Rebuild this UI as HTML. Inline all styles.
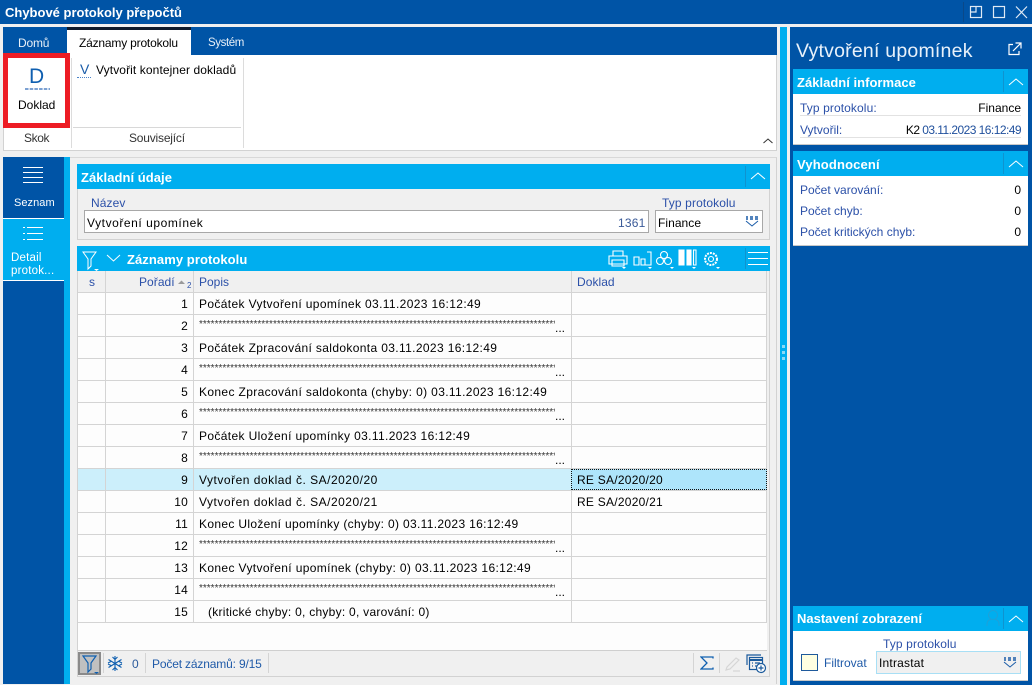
<!DOCTYPE html>
<html lang="cs"><head><meta charset="utf-8"><title>Chybové protokoly přepočtů</title>
<style>
*{box-sizing:border-box}
html,body{margin:0;padding:0;width:1032px;height:685px;overflow:hidden;background:#f0f0f0;font-family:"Liberation Sans",sans-serif;font-size:12px;color:#000}
.a,.t,svg{position:absolute}
.t{white-space:nowrap;line-height:16px}
.l{color:#2b50a8}
.w{color:#fff}
.h{background:#00aeef;position:absolute;height:25px}
.b{font-weight:bold;font-size:13px;letter-spacing:.05px;color:#fff}
.r{position:absolute;left:78px;width:689px;height:22px;border-bottom:1px solid #d4d4d4;background:#fdfdfd}
.r i{position:absolute;top:0;bottom:0;width:1px;background:#d4d4d4}
.r i:first-child{display:none}
.r b{font-weight:normal;position:absolute;right:579px;top:3px;line-height:16px;width:60px;text-align:right;letter-spacing:.2px}
.r span{position:absolute;left:121px;top:3px;line-height:16px;white-space:nowrap;letter-spacing:.36px}
.r u{text-decoration:none;position:absolute;left:121px;top:2px;line-height:16px;white-space:nowrap;font-size:10px;color:#333;width:356px;overflow:hidden}
.r em{font-style:normal;position:absolute;left:477px;top:5px;line-height:16px;font-size:12px}
.r s{text-decoration:none;position:absolute;left:499px;top:3px;line-height:16px;white-space:nowrap;letter-spacing:.25px}
</style></head><body>

<div class="a" style="left:0;top:0;width:1032px;height:24px;background:#0054a6"></div>
<div class="t b" style="left:5px;top:5px;letter-spacing:0">Chybové protokoly přepočtů</div>
<div class="a" style="left:963px;top:2px;width:1px;height:20px;background:#0a4888"></div>
<svg style="left:969px;top:5px" width="60" height="15" fill="none" stroke="#dfeaf5" stroke-width="1.2"><rect x="1.5" y="1.5" width="11" height="11"/><path d="M7 1.500V7H1.500" /><rect x="24.500" y="1.500" width="11" height="11"/><path d="M47 1.500L58 13M58 1.500L47 13"/></svg>

<!-- ribbon -->
<div class="a" style="left:3px;top:27px;width:774px;height:28px;background:#0054a6"></div>
<div class="a" style="left:3px;top:55px;width:774px;height:96px;background:#fff;border:1px solid #d2d2d2;border-top:0"></div>
<div class="a" style="left:67px;top:27px;width:124px;height:28px;background:#fff;border-top:3px solid #0e1a2b"></div>
<div class="t" style="left:18px;top:35px;letter-spacing:-.2px;color:#e8f0f8">Domů</div>
<div class="t" style="left:79px;top:35px;letter-spacing:-.19px">Záznamy protokolu</div>
<div class="t" style="left:208px;top:35px;font-size:11.500px;letter-spacing:-.4px;color:#e8f0f8">Systém</div>
<div class="a" style="left:3px;top:53px;width:67px;height:75px;border:5px solid #ed1c24;background:#fff"></div>
<div class="t" style="left:29px;top:65px;font-size:21px;line-height:24px;color:#0f5fb0">D</div>
<svg style="left:25px;top:88px" width="25" height="2"><path d="M0 1H25" stroke="#2f69b8" stroke-width="1.300" stroke-dasharray="3.500 1.200"/></svg>
<div class="t" style="left:18px;top:97px;letter-spacing:0">Doklad</div>
<div class="t" style="left:80px;top:61px;font-size:14px;line-height:16px;color:#1a5ca8">V</div>
<div class="a" style="left:77px;top:77px;width:14px;height:0;border-top:1px dotted #4a82c8"></div>
<div class="t" style="left:96px;top:62px;letter-spacing:.1px">Vytvořit kontejner dokladů</div>
<div class="a" style="left:73px;top:127px;width:168px;height:1px;background:#d8d8d8"></div>
<div class="a" style="left:71px;top:58px;width:1px;height:90px;background:#dcdcdc"></div>
<div class="a" style="left:243px;top:58px;width:1px;height:90px;background:#dcdcdc"></div>
<div class="t" style="left:24px;top:130px;color:#333;letter-spacing:-.4px">Skok</div>
<div class="t" style="left:129px;top:130px;color:#333;letter-spacing:-.2px">Související</div>
<svg style="left:762px;top:137px" width="12" height="8" fill="none" stroke="#333" stroke-width="1"><path d="M1.500 6L6 2l4.500 4"/></svg>

<!-- left nav -->
<div class="a" style="left:3px;top:157px;width:61px;height:527px;background:#0054a6"></div>
<div class="a" style="left:64px;top:157px;width:6px;height:527px;background:#00aeef"></div>
<div class="a" style="left:70px;top:157px;width:707px;height:527px;background:#f0f0f0;border-right:1px solid #d2d2d2;border-top:1px solid #d8d8d8"></div>
<svg style="left:23px;top:166px" width="20" height="20" stroke="#fff" stroke-width="1"><path d="M0 1.500H20M0 6.500H20M0 11.500H20M0 16.500H20"/></svg>
<div class="t w" style="left:14px;top:195px;font-size:11px;letter-spacing:.05px">Seznam</div>
<div class="a" style="left:3px;top:218px;width:61px;height:63px;background:#00aeef;border-top:1px solid #fff;border-bottom:1px solid #fff"></div>
<svg style="left:23px;top:226px" width="20" height="16" stroke="#fff" stroke-width="1"><path d="M4 1.500H20M4 7.500H20M4 13.500H20M0 1.500H2M0 7.500H2M0 13.500H2"/></svg>
<div class="t w" style="left:11px;top:252px;font-size:11.500px;line-height:13px;letter-spacing:.2px">Detail<br>protok...</div>

<!-- section zakladni udaje -->
<div class="a" style="left:77px;top:189px;width:693px;height:51px;background:#f0f0f0;border:1px solid #d2d2d2;border-top:0"></div>
<div class="h" style="left:77px;top:164px;width:693px"></div>
<div class="t b" style="left:81px;top:170px">Základní údaje</div>
<div class="a" style="left:745px;top:166px;width:1px;height:21px;background:#0f93cf"></div>
<svg style="left:750px;top:171px" width="16" height="10" fill="none" stroke="#fff" stroke-width="1"><path d="M1 8L8 2l7 6"/></svg>
<div class="t l" style="left:91px;top:195px;letter-spacing:.1px">Název</div>
<div class="a" style="left:84px;top:210px;width:565px;height:23px;background:#fff;border:1px solid #a8a8a8"></div>
<div class="t" style="left:87px;top:215px;letter-spacing:.56px">Vytvoření upomínek</div>
<div class="t" style="left:618px;top:215px;color:#3a5a98;letter-spacing:.2px">1361</div>
<div class="t l" style="left:662px;top:195px;letter-spacing:.12px">Typ protokolu</div>
<div class="a" style="left:655px;top:210px;width:108px;height:23px;background:#fff;border:1px solid #a8a8a8"></div>
<div class="t" style="left:658px;top:215px;letter-spacing:.05px">Finance</div>
<svg style="left:745px;top:216px" width="14" height="12" fill="none" stroke="#1a5ca8"><path d="M1 5l6 5 6-5" stroke-width="1"/><path d="M1 1h2M5 1h3M10 1h3M1 3h2M5 3h3M10 3h3" stroke-width="1.600"/></svg>

<!-- grid -->
<div class="a" style="left:77px;top:271px;width:693px;height:406px;background:#f0f0f0;border:1px solid #d2d2d2;border-top:0"></div>
<div class="h" style="left:77px;top:246px;width:693px"></div>
<svg style="left:82px;top:251px" width="20" height="20" fill="none" stroke="#fff" stroke-width="1"><path d="M1 1H14L9 8V15L6 18V8Z"/><path d="M12 18h5l-2.500 2z" fill="#fff" stroke="none"/></svg>
<svg style="left:106px;top:254px" width="15" height="9" fill="none" stroke="#fff" stroke-width="1"><path d="M1 1l6.500 6L14 1"/></svg>
<div class="t b" style="left:127px;top:252px;letter-spacing:.07px">Záznamy protokolu</div>
<svg style="left:608px;top:249px" width="130" height="22" fill="none" stroke="#fff" stroke-width="1.100">
<path d="M5 7V2H15V7M1 7H19V15H1ZM4 11H16V17H4Z"/><path d="M14 18h4l-2 2z" fill="#fff" stroke="none"/>
<path d="M26 8H31V16H26ZM33 10H37V16H33ZM39 3H43V16H37" /><path d="M40 18h4l-2 2z" fill="#fff" stroke="none"/>
<circle cx="56" cy="6" r="3.500"/><circle cx="52" cy="12" r="3.500"/><circle cx="60" cy="12" r="3.500"/><path d="M62 18h4l-2 2z" fill="#fff" stroke="none"/>
<path d="M71 1H76V16H71ZM79 1H83V16H79Z" fill="#fff"/><path d="M85.500 1H88V16H85.500Z"/><path d="M84 18h4l-2 2z" fill="#fff" stroke="none"/>
<circle cx="103" cy="10" r="6" stroke-dasharray="2 1" stroke-width="2"/><circle cx="103" cy="10" r="2.500"/><path d="M108 18h4l-2 2z" fill="#fff" stroke="none"/>
</svg>
<div class="a" style="left:745px;top:248px;width:1px;height:21px;background:#0f93cf"></div>
<svg style="left:748px;top:252px" width="20" height="14" stroke="#fff" stroke-width="1"><path d="M0 .500H20M0 6.500H20M0 12.500H20"/></svg>

<!-- column header -->
<div class="a" style="left:78px;top:271px;width:689px;height:22px;background:#f0f0f0;border-bottom:1px solid #d4d4d4"></div>
<div class="a" style="left:105px;top:271px;width:1px;height:22px;background:#d4d4d4"></div>
<div class="a" style="left:193px;top:271px;width:1px;height:22px;background:#d4d4d4"></div>
<div class="a" style="left:571px;top:271px;width:1px;height:22px;background:#d4d4d4"></div>
<div class="a" style="left:766px;top:271px;width:1px;height:22px;background:#d4d4d4"></div>
<div class="t l" style="left:89px;top:274px">s</div>
<div class="t l" style="left:139px;top:274px;letter-spacing:.05px">Pořadí</div>
<svg style="left:177px;top:279px" width="16" height="10"><path d="M1 5l3.500-3.500L8 5z" fill="#9a9a9a"/><text x="10" y="9" font-family="Liberation Sans" font-size="8" fill="#2b50a8">2</text></svg>
<div class="t l" style="left:199px;top:274px">Popis</div>
<div class="t l" style="left:577px;top:274px;letter-spacing:.05px">Doklad</div>

<!-- rows -->
<div class="a" style="left:78px;top:293px;width:691px;height:358px;background:#fdfdfd;border-bottom:1px solid #cfcfcf"></div>
<div class="a" style="left:767px;top:271px;width:3px;height:380px;background:#f0f0f0"></div>
<div class="a" style="left:769px;top:271px;width:1px;height:380px;background:#d2d2d2"></div>

<div class="r" style="top:293px"><i style="left:0"></i><i style="left:27px"></i><i style="left:115px"></i><i style="left:493px"></i><i style="left:688px"></i><b>1</b><span>Počátek Vytvoření upomínek 03.11.2023 16:12:49</span></div>
<div class="r" style="top:315px"><i style="left:0"></i><i style="left:27px"></i><i style="left:115px"></i><i style="left:493px"></i><i style="left:688px"></i><b>2</b><u>*****************************************************************************************************************</u><em>...</em></div>
<div class="r" style="top:337px"><i style="left:0"></i><i style="left:27px"></i><i style="left:115px"></i><i style="left:493px"></i><i style="left:688px"></i><b>3</b><span>Počátek Zpracování saldokonta 03.11.2023 16:12:49</span></div>
<div class="r" style="top:359px"><i style="left:0"></i><i style="left:27px"></i><i style="left:115px"></i><i style="left:493px"></i><i style="left:688px"></i><b>4</b><u>*****************************************************************************************************************</u><em>...</em></div>
<div class="r" style="top:381px"><i style="left:0"></i><i style="left:27px"></i><i style="left:115px"></i><i style="left:493px"></i><i style="left:688px"></i><b>5</b><span>Konec Zpracování saldokonta (chyby: 0) 03.11.2023 16:12:49</span></div>
<div class="r" style="top:403px"><i style="left:0"></i><i style="left:27px"></i><i style="left:115px"></i><i style="left:493px"></i><i style="left:688px"></i><b>6</b><u>*****************************************************************************************************************</u><em>...</em></div>
<div class="r" style="top:425px"><i style="left:0"></i><i style="left:27px"></i><i style="left:115px"></i><i style="left:493px"></i><i style="left:688px"></i><b>7</b><span>Počátek Uložení upomínky 03.11.2023 16:12:49</span></div>
<div class="r" style="top:447px"><i style="left:0"></i><i style="left:27px"></i><i style="left:115px"></i><i style="left:493px"></i><i style="left:688px"></i><b>8</b><u>*****************************************************************************************************************</u><em>...</em></div>
<div class="r" style="top:469px;background:#cceffb"><i style="left:0"></i><i style="left:27px"></i><i style="left:115px"></i><b>9</b><span style="letter-spacing:.5px">Vytvořen doklad č. SA/2020/20</span><div class="a" style="left:493px;top:0;width:196px;height:21px;background:#aee5fb;outline:1px dotted #111;outline-offset:-1px"></div><s>RE SA/2020/20</s></div>
<div class="r" style="top:491px"><i style="left:0"></i><i style="left:27px"></i><i style="left:115px"></i><i style="left:493px"></i><i style="left:688px"></i><b>10</b><span style="letter-spacing:.5px">Vytvořen doklad č. SA/2020/21</span><s>RE SA/2020/21</s></div>
<div class="r" style="top:513px"><i style="left:0"></i><i style="left:27px"></i><i style="left:115px"></i><i style="left:493px"></i><i style="left:688px"></i><b>11</b><span style="letter-spacing:.33px">Konec Uložení upomínky (chyby: 0) 03.11.2023 16:12:49</span></div>
<div class="r" style="top:535px"><i style="left:0"></i><i style="left:27px"></i><i style="left:115px"></i><i style="left:493px"></i><i style="left:688px"></i><b>12</b><u>*****************************************************************************************************************</u><em>...</em></div>
<div class="r" style="top:557px"><i style="left:0"></i><i style="left:27px"></i><i style="left:115px"></i><i style="left:493px"></i><i style="left:688px"></i><b>13</b><span>Konec Vytvoření upomínek (chyby: 0) 03.11.2023 16:12:49</span></div>
<div class="r" style="top:579px"><i style="left:0"></i><i style="left:27px"></i><i style="left:115px"></i><i style="left:493px"></i><i style="left:688px"></i><b>14</b><u>*****************************************************************************************************************</u><em>...</em></div>
<div class="r" style="top:601px"><i style="left:0"></i><i style="left:27px"></i><i style="left:115px"></i><i style="left:493px"></i><i style="left:688px"></i><b>15</b><span style="left:130px;letter-spacing:.26px">(kritické chyby: 0, chyby: 0, varování: 0)</span></div>

<!-- status bar -->
<div class="a" style="left:78px;top:652px;width:23px;height:23px;background:#c0c0c0;border:2px solid #8a8a8a"></div>
<svg style="left:82px;top:655px" width="18" height="20" fill="none" stroke="#0f5fb0" stroke-width="1.200"><path d="M1 1H14L9 8V14L6 17V8Z"/><path d="M12 17h5l-2.500 2z" fill="#0f5fb0" stroke="none"/></svg>
<div class="a" style="left:103px;top:653px;width:1px;height:20px;background:#d4d4d4"></div>
<svg style="left:107px;top:655px" width="16" height="17" fill="none" stroke="#0f5fb0" stroke-width="1.100"><path d="M8 1V16M1.500 4.500L14.500 12.500M14.500 4.500L1.500 12.500M5.500 2L8 4.500 10.500 2M5.500 15L8 12.500 10.500 15M1 8L4 6.500M1 9L4 10.500M15 8L12 6.500M15 9L12 10.500"/></svg>
<div class="t" style="left:132px;top:656px;color:#2b5a9c">0</div>
<div class="a" style="left:145px;top:653px;width:1px;height:20px;background:#d4d4d4"></div>
<div class="t" style="left:152px;top:656px;color:#1f5aa8;letter-spacing:-.16px">Počet záznamů: 9/15</div>
<div class="a" style="left:268px;top:653px;width:1px;height:20px;background:#d4d4d4"></div>
<div class="a" style="left:693px;top:653px;width:1px;height:20px;background:#d4d4d4"></div>
<div class="a" style="left:719px;top:653px;width:1px;height:20px;background:#d4d4d4"></div>
<svg style="left:700px;top:656px" width="14" height="15" fill="none" stroke="#0f5fb0" stroke-width="1.300"><path d="M13 2.500V1H1L7 7 1 13H13V11.500"/></svg>
<svg style="left:725px;top:656px" width="16" height="16" fill="none" stroke="#d6d6d6" stroke-width="1.200"><path d="M2 11L11 2l3 2-9 9-4 1zM8 15H15"/></svg>
<svg style="left:746px;top:654px" width="21" height="20" fill="none" stroke="#1a5a9c" stroke-width="1.200"><path d="M1 11V1H15"/><rect x="3.500" y="3.500" width="13" height="12" fill="#f0f0f0"/><path d="M3.500 6H16.500" stroke-width="2"/><path d="M6 9h1M9 9h5M6 12h1M9 12h5"/><circle cx="15" cy="14" r="4.500" fill="#fff"/><path d="M12.500 14h5M15 11.500v5"/></svg>

<!-- splitter -->
<div class="a" style="left:780px;top:27px;width:7px;height:658px;background:#00aeef"></div>
<svg style="left:782px;top:345px" width="4" height="18" fill="#8adaf7"><rect x="0" y="0" width="3" height="3"/><rect x="0" y="6" width="3" height="3"/><rect x="0" y="12" width="3" height="3"/></svg>

<!-- right panel -->
<div class="a" style="left:790px;top:27px;width:242px;height:658px;background:#0054a6"></div>
<div class="t" style="left:796px;top:39px;font-size:19.500px;line-height:24px;color:#e8f1fa;letter-spacing:.22px">Vytvoření upomínek</div>
<svg style="left:1008px;top:42px" width="14" height="14" fill="none" stroke="#fff" stroke-width="1.200"><path d="M5 2.500H1V12.500H11V9M5 9L12.500 1.500M7.500 1H13V6.500"/></svg>

<div class="h" style="left:793px;top:69px;width:235px"></div>
<div class="a" style="left:793px;top:94px;width:235px;height:51px;background:#fff;border-bottom:1px solid #c8c8c8"></div>
<div class="t b" style="left:797px;top:75px;letter-spacing:.02px">Základní informace</div>
<div class="a" style="left:1003px;top:71px;width:1px;height:21px;background:#0f93cf"></div>
<svg style="left:1008px;top:77px" width="16" height="10" fill="none" stroke="#fff" stroke-width="1"><path d="M1 8L8 2l7 6"/></svg>
<div class="t l" style="left:800px;top:100px;letter-spacing:.1px">Typ protokolu:</div>
<div class="t" style="right:11px;top:100px">Finance</div>
<div class="a" style="left:800px;top:115px;width:221px;height:1px;background:#e2e2e2"></div>
<div class="t l" style="left:800px;top:122px">Vytvořil:</div>
<div class="t" style="right:11px;top:122px;letter-spacing:-.55px">K2 <span style="color:#1f4f9c">03.11.2023 16:12:49</span></div>
<div class="a" style="left:800px;top:137px;width:221px;height:1px;background:#e2e2e2"></div>

<div class="h" style="left:793px;top:151px;width:235px"></div>
<div class="a" style="left:793px;top:176px;width:235px;height:70px;background:#fff;border-bottom:1px solid #c8c8c8"></div>
<div class="t b" style="left:797px;top:157px;letter-spacing:.15px">Vyhodnocení</div>
<div class="a" style="left:1003px;top:153px;width:1px;height:21px;background:#0f93cf"></div>
<svg style="left:1008px;top:159px" width="16" height="10" fill="none" stroke="#fff" stroke-width="1"><path d="M1 8L8 2l7 6"/></svg>
<div class="t l" style="left:800px;top:182px">Počet varování:</div><div class="t" style="right:11px;top:182px">0</div>
<div class="t l" style="left:800px;top:203px">Počet chyb:</div><div class="t" style="right:11px;top:203px">0</div>
<div class="t l" style="left:800px;top:224px">Počet kritických chyb:</div><div class="t" style="right:11px;top:224px">0</div>

<div class="h" style="left:793px;top:606px;width:235px"></div>
<div class="a" style="left:793px;top:631px;width:235px;height:50px;background:#fff;border-bottom:1px solid #c8c8c8"></div>
<div class="t b" style="left:797px;top:611px;letter-spacing:0">Nastavení zobrazení</div>
<svg style="left:985px;top:609px" width="16" height="20" fill="none" stroke="#1fa0d8" stroke-width="1"><circle cx="8" cy="6" r="4.500"/><path d="M2 17V15Q2 11 6 10.500M14 17V15Q14 11 10 10.500"/></svg>
<div class="a" style="left:1003px;top:608px;width:1px;height:21px;background:#0f93cf"></div>
<svg style="left:1008px;top:614px" width="16" height="10" fill="none" stroke="#fff" stroke-width="1"><path d="M1 8L8 2l7 6"/></svg>
<div class="a" style="left:801px;top:654px;width:17px;height:17px;background:#ffffe1;border:1px solid #1f5a9c"></div>
<div class="t l" style="left:824px;top:655px;color:#1f5aa8">Filtrovat</div>
<div class="t l" style="left:883px;top:636px;letter-spacing:.12px">Typ protokolu</div>
<div class="a" style="left:876px;top:651px;width:145px;height:23px;background:#f0f0f0;border:1px solid #a8dff5"></div>
<div class="t" style="left:879px;top:655px;letter-spacing:.2px">Intrastat</div>
<svg style="left:1003px;top:657px" width="14" height="12" fill="none" stroke="#1a5ca8"><path d="M1 5l6 5 6-5" stroke-width="1"/><path d="M1 1h2M5 1h3M10 1h3M1 3h2M5 3h3M10 3h3" stroke-width="1.600"/></svg>
</body></html>
